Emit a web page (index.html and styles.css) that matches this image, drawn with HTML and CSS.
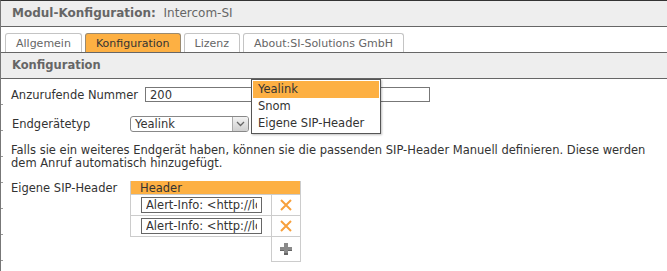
FILE: index.html
```html
<!DOCTYPE html>
<html lang="de">
<head>
    <meta charset="UTF-8">
    <title>Modul-Konfiguration: Intercom-SI</title>
    <link rel="stylesheet" href="styles.css">
</head>
<body>

<div class="page">
    <!-- Title -->
    <div class="titlebar">
        <strong>Modul-Konfiguration:</strong> Intercom-SI
    </div>

    <!-- Tabs -->
    <div class="tabs">
        <span class="tab">Allgemein</span>
        <span class="tab active">Konfiguration</span>
        <span class="tab">Lizenz</span>
        <span class="tab">About:SI-Solutions GmbH</span>
    </div>

    <div class="section-head">Konfiguration</div>

    <div class="content">
        <div class="field-row row-number">
            <label class="label label-number" for="number">Anzurufende Nummer</label>
            <input class="text-input number-input" id="number" type="text" value="200">
        </div>

        <div class="field-row row-device">
            <span class="label label-device">Endgerätetyp</span>
            <div class="select">
                <span class="select-value">Yealink</span>
                <span class="select-arrow">
                    <svg width="9" height="6" viewBox="0 0 9 6"><path d="M1 1 L4.5 4.5 L8 1" fill="none" stroke="#666" stroke-width="1.3"/></svg>
                </span>
            </div>
        </div>

        <p class="hint">Falls sie ein weiteres Endgerät haben, können sie die passenden SIP-Header Manuell definieren. Diese werden dem Anruf automatisch hinzugefügt.</p>

        <div class="field-row row-headers">
            <span class="label label-headers">Eigene SIP-Header</span>
            <table class="sip-table">
                <tr>
                    <th colspan="2">Header</th>
                </tr>
                <tr class="sip-row">
                    <td class="cell-value"><input class="text-input sip-input" type="text" value="Alert-Info: &lt;http://localhost&gt;;info=alert-autoanswer"></td>
                    <td class="cell-action">
                        <svg width="12" height="12" viewBox="0 0 12 12"><path d="M1 1 L11 11 M11 1 L1 11" stroke="#f7a03c" stroke-width="2"/></svg>
                    </td>
                </tr>
                <tr class="sip-row">
                    <td class="cell-value"><input class="text-input sip-input" type="text" value="Alert-Info: &lt;http://localhost&gt;;info=alert-autoanswer"></td>
                    <td class="cell-action">
                        <svg width="12" height="12" viewBox="0 0 12 12"><path d="M1 1 L11 11 M11 1 L1 11" stroke="#f7a03c" stroke-width="2"/></svg>
                    </td>
                </tr>
                <tr class="add-row">
                    <td class="cell-empty"></td>
                    <td class="cell-action cell-add">
                        <svg width="12" height="12" viewBox="0 0 12 12">
                            <rect x="4" y="0" width="4" height="12" fill="#8a8a8a"/>
                            <rect x="0" y="4" width="12" height="4" fill="#8a8a8a"/>
                            <rect x="4" y="10" width="4" height="2" fill="#666"/>
                            <rect x="0" y="7" width="4" height="1" fill="#666"/>
                            <rect x="8" y="7" width="4" height="1" fill="#666"/>
                        </svg>
                    </td>
                </tr>
            </table>
        </div>

        <!-- open select list -->
        <ul class="dropdown">
            <li class="selected">Yealink</li>
            <li>Snom</li>
            <li>Eigene SIP-Header</li>
        </ul>
    </div>
</div>

</body>
</html>
```

FILE: styles.css
```css
body {
    margin: 0;
    font-family: "DejaVu Sans", Verdana, sans-serif;
    font-size: 11.5px;
    color: #333;
    background-color: #fff;
}
.page {
    border-top: 1px solid #333;
    border-left: 1px solid #777;
    height: 270px;
    overflow: hidden;
}
.titlebar {
    height: 25px;
    line-height: 25px;
    padding-left: 11px;
    background-color: #eee;
    border-bottom: 1px solid #666;
    color: #666;
    font-size: 12px;
}
.titlebar strong {
    margin-right: 4px;
}
.tabs {
    height: 19px;
    padding: 6px 0 0 4px;
    border-bottom: 1px solid #666;
    display: flex;
    gap: 3px;
}
.tab {
    height: 19px;
    line-height: 19px;
    padding: 0 10px;
    border: 1px solid #c4c4c4;
    border-bottom: none;
    border-radius: 3px 3px 0 0;
    color: #666;
    font-size: 11px;
    box-sizing: border-box;
    background-color: #fff;
}
.tab.active {
    background-color: #fdb043;
    border-color: #9a8a70;
    color: #333;
}
.section-head {
    height: 25px;
    line-height: 25px;
    padding-left: 11px;
    background-color: #eee;
    border-bottom: 1px solid #666;
    color: #666;
    font-weight: bold;
}
.content {
    position: relative;
    padding-left: 10px;
    height: 200px;
    background: repeating-linear-gradient(to bottom, transparent 0, transparent 25px, #999 25px, #999 26px) left top / 2px 100% no-repeat;
}
.field-row {
    display: flex;
    align-items: center;
}
.label {
    flex-shrink: 0;
}
.row-number {
    padding-top: 8px;
}
.label-number {
    width: 134px;
}
.text-input {
    box-sizing: border-box;
    font-family: inherit;
    font-size: 11.5px;
    color: #333;
    border: 1px solid #777;
    border-radius: 0;
    padding: 0 4px;
    margin: 0;
    outline: none;
}
.number-input {
    width: 285px;
    height: 15px;
}
.row-device {
    margin-top: 14px;
}
.label-device {
    width: 118px;
    padding-left: 1px;
}
.select {
    width: 119px;
    height: 16px;
    box-sizing: border-box;
    border: 1px solid #888;
    border-radius: 3px;
    display: flex;
    overflow: hidden;
}
.select-value {
    flex: 1;
    padding-left: 4px;
    line-height: 14px;
}
.select-arrow {
    width: 15px;
    border-left: 1px solid #aaa;
    background: linear-gradient(#f2f2f2, #cfcfcf);
    display: flex;
    align-items: center;
    justify-content: center;
}
.hint {
    margin: 12px 10px 0 0;
    line-height: 13px;
}
.row-headers {
    margin-top: 11px;
    align-items: flex-start;
}
.label-headers {
    width: 119px;
    line-height: 13px;
    padding-top: 1px;
}
.sip-table {
    border-collapse: collapse;
    width: 171px;
}
.sip-table th {
    height: 13px;
    padding: 0 0 0 9px;
    text-align: left;
    font-weight: normal;
    background-color: #fdb043;
    border: 1px solid #ccc;
    border-top: none;
    line-height: 12px;
}
.sip-table td {
    padding: 0;
    border: 1px solid #ccc;
}
.sip-row td {
    height: 20px;
}
.cell-value {
    width: 140px;
}
.sip-input {
    width: 121px;
    height: 16px;
    margin-left: 10px;
    border-color: #666;
    display: block;
}
.cell-action {
    text-align: center;
    vertical-align: middle;
}
.cell-action svg {
    display: block;
    margin: 0 auto;
}
.add-row td {
    height: 24px;
}
.sip-table .cell-empty {
    border: none;
}
.dropdown {
    position: absolute;
    left: 250px;
    top: 0;
    width: 130px;
    box-sizing: border-box;
    margin: 0;
    padding: 1px;
    list-style: none;
    background-color: #fff;
    border: 1px solid #555;
    box-shadow: 1px 1px 2px rgba(0, 0, 0, 0.25);
}
.dropdown li {
    height: 17px;
    line-height: 17px;
    padding-left: 5px;
    color: #333;
}
.dropdown li.selected {
    background-color: #fdb043;
}
```
